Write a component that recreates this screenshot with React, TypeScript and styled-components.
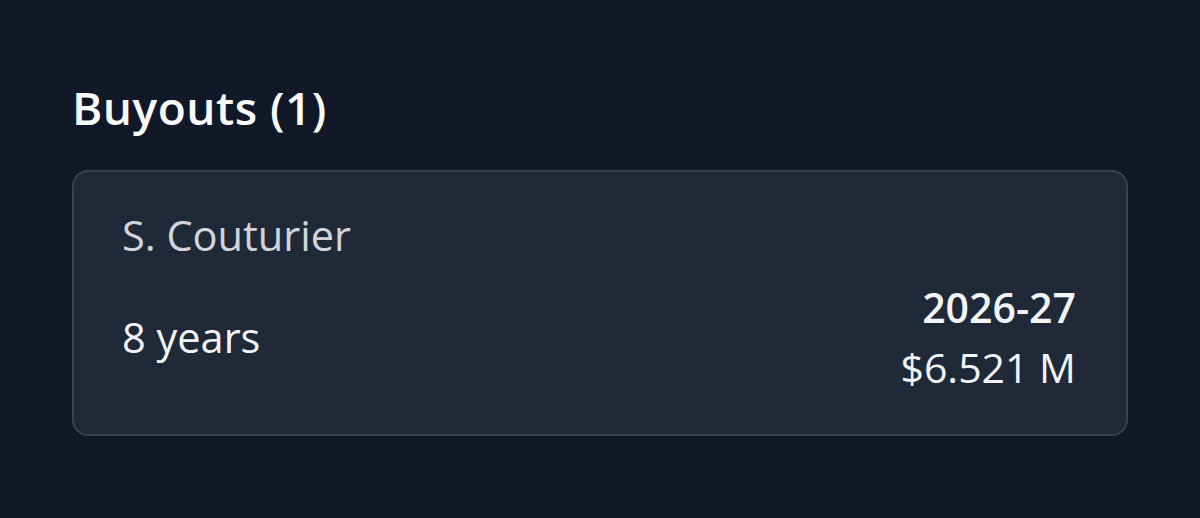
import React from "react";
import styled, { createGlobalStyle } from "styled-components";

const Global = createGlobalStyle`
  html, body { margin: 0; padding: 0; background: #111827; }
  body { font-family: "Open Sans", "Noto Sans", sans-serif; }
`;

const Page = styled.div`
  width: 1200px;
  height: 518px;
  box-sizing: border-box;
  padding: 70px 72px 0 72px;
  background: #111827;
  color: #f9fafb;
`;

const Title = styled.h2`
  margin: 0 0 26px 0;
  font-size: 46px;
  line-height: 74px;
  font-weight: 600;
  letter-spacing: 0.5px;
  color: #f9fafb;
`;

const Card = styled.div`
  box-sizing: border-box;
  height: 266px;
  border: 2px solid #374151;
  border-radius: 16px;
  background: #1f2937;
  padding: 32px 50px 30px 48px;
  display: flex;
  flex-direction: column;
`;

const Name = styled.div`
  font-size: 41.5px;
  line-height: 62px;
  color: #d1d5db;
  margin-bottom: 11px;
`;

const Row = styled.div`
  display: flex;
  justify-content: space-between;
  align-items: center;
`;

const Term = styled.div`
  font-size: 41.5px;
  line-height: 62px;
  color: #f3f4f6;
`;

const Right = styled.div`
  display: flex;
  flex-direction: column;
  align-items: flex-end;
`;

const Value = styled.div<{ $bold?: boolean }>`
  font-size: 41px;
  line-height: 60px;
  font-weight: ${(p) => (p.$bold ? 600 : 400)};
  color: #f3f4f6;
`;

export default function App() {
  return (
    <>
      <Global />
      <Page>
        <Title>Buyouts (1)</Title>
        <Card>
          <Name>S. Couturier</Name>
          <Row>
            <Term>8 years</Term>
            <Right>
              <Value $bold>2026-27</Value>
              <Value>$6.521 M</Value>
            </Right>
          </Row>
        </Card>
      </Page>
    </>
  );
}
